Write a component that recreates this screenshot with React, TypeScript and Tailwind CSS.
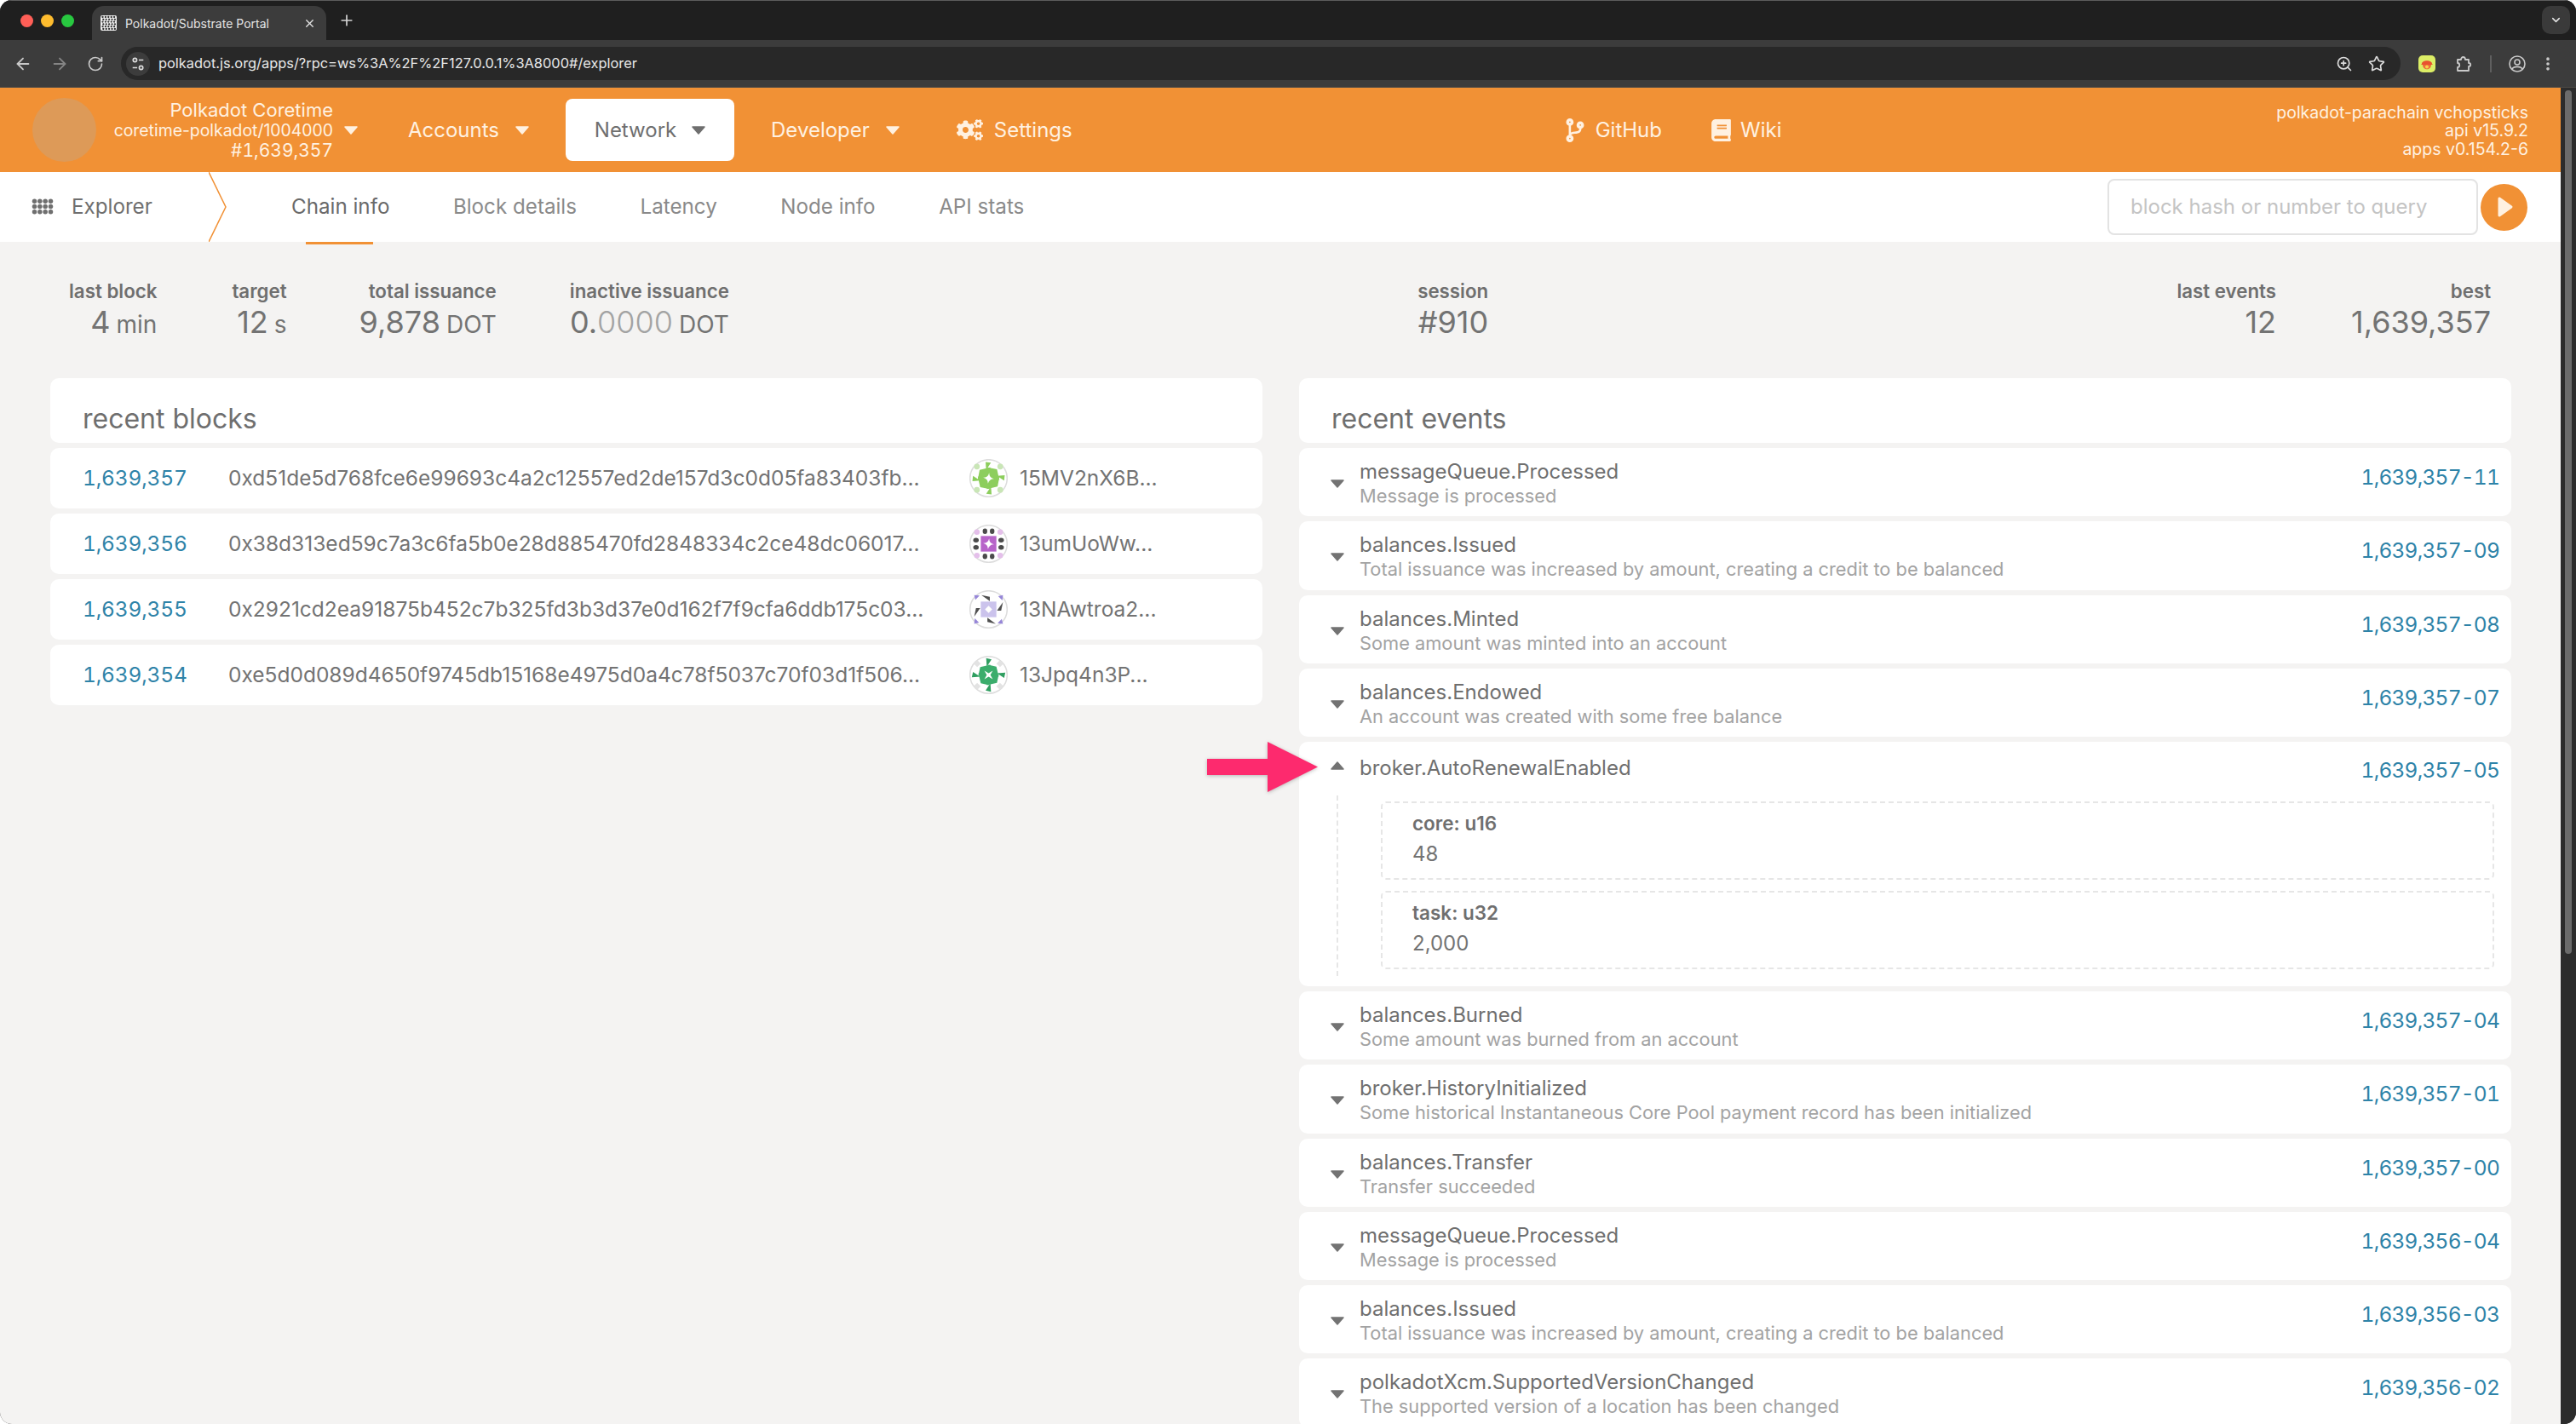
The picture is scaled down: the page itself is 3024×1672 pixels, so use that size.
import { ArrowLeft, ArrowRight, ChevronDown, EllipsisVertical, Plus, RotateCw, Star, X, ZoomIn } from "lucide-react"
import { FaBook, FaCodeBranch, FaCogs } from "react-icons/fa"

const blocks = [
  { number: "1,639,357", hash: "0xd51de5d768fce6e99693c4a2c12557ed2de157d3c0d05fa83403fb...", author: "15MV2nX6B...", icon: 0 },
  { number: "1,639,356", hash: "0x38d313ed59c7a3c6fa5b0e28d885470fd2848334c2ce48dc06017...", author: "13umUoWw...", icon: 1 },
  { number: "1,639,355", hash: "0x2921cd2ea91875b452c7b325fd3b3d37e0d162f7f9cfa6ddb175c03...", author: "13NAwtroa2...", icon: 2 },
  { number: "1,639,354", hash: "0xe5d0d089d4650f9745db15168e4975d0a4c78f5037c70f03d1f506...", author: "13Jpq4n3P...", icon: 3 },
]

const eventsTop = [
  { name: "messageQueue.Processed", desc: "Message is processed", id: "1,639,357-11" },
  { name: "balances.Issued", desc: "Total issuance was increased by amount, creating a credit to be balanced", id: "1,639,357-09" },
  { name: "balances.Minted", desc: "Some amount was minted into an account", id: "1,639,357-08" },
  { name: "balances.Endowed", desc: "An account was created with some free balance", id: "1,639,357-07" },
]

const eventsBottom = [
  { name: "balances.Burned", desc: "Some amount was burned from an account", id: "1,639,357-04" },
  { name: "broker.HistoryInitialized", desc: "Some historical Instantaneous Core Pool payment record has been initialized", id: "1,639,357-01" },
  { name: "balances.Transfer", desc: "Transfer succeeded", id: "1,639,357-00" },
  { name: "messageQueue.Processed", desc: "Message is processed", id: "1,639,356-04" },
  { name: "balances.Issued", desc: "Total issuance was increased by amount, creating a credit to be balanced", id: "1,639,356-03" },
  { name: "polkadotXcm.SupportedVersionChanged", desc: "The supported version of a location has been changed", id: "1,639,356-02" },
]

const turns = [0, 90, 180, 270]

function Caret({ up = false, className = "" }: { up?: boolean; className?: string }) {
  return (
    <svg viewBox="0 0 16 10" className={`w-4 h-2.5 fill-current shrink-0 ${className}`}>
      {up ? (
        <path d="M8 1 L15 9 L1 9 Z" stroke="currentColor" strokeWidth="1.5" strokeLinejoin="round" />
      ) : (
        <path d="M1 1 L15 1 L8 9 Z" stroke="currentColor" strokeWidth="1.5" strokeLinejoin="round" />
      )}
    </svg>
  )
}

function Identicon({ kind }: { kind: number }) {
  return (
    <svg viewBox="0 0 64 64" className="w-[45px] h-[45px] shrink-0">
      <circle cx="32" cy="32" r="31" fill="#fff" stroke="#dddddd" strokeWidth="2.2" />
      {turns.map((t) => (
        <g key={t} transform={`rotate(${t} 32 32)`}>
          {kind === 0 && (
            <>
              <circle cx="12.5" cy="12.5" r="4.8" fill="#c9e6b6" />
              <path d="M27 5 L36 6 L28 18 Z" fill="#8dce5d" />
              <path d="M17 18 L35 14 L32 32 L14 34 Z" fill="#8dce5d" />
            </>
          )}
          {kind === 1 && (
            <>
              <circle cx="12.5" cy="12.5" r="4.6" fill="#e4bfea" />
              <ellipse cx="26" cy="11" rx="3.8" ry="4.6" fill="#4b4b4b" />
              <ellipse cx="38" cy="11" rx="3.8" ry="4.6" fill="#4b4b4b" />
            </>
          )}
          {kind === 2 && (
            <>
              <path d="M8 8 L17 9 L10 16 Z" fill="#9686d8" />
              <path d="M20 8 L34 11 L34 18 Z" fill="#4f4f4f" />
            </>
          )}
          {kind === 3 && (
            <>
              <path d="M7 13 L13 7 L19 13 L13 19 Z" fill="#e3e3e3" />
              <path d="M28 4 L37 6 L29 18 Z" fill="#2f9e60" />
              <path d="M18 19 L35 15 L32 32 L15 33 Z" fill="#3bad6c" />
            </>
          )}
        </g>
      ))}
      {kind === 1 && <rect x="19" y="19" width="26" height="26" fill="#b764c9" />}
      {kind === 2 && <rect x="19" y="19" width="26" height="26" fill="#cbc3ec" />}
      {kind === 2 ? (
        <path d="M32 26 L38 32 L32 38 L26 32 Z" fill="#fff" />
      ) : kind === 3 ? (
        <path d="M25 25 L32 29 L39 25 L35 32 L39 39 L32 35 L25 39 L29 32 Z" fill="#fff" />
      ) : (
        <path d="M33 23 Q33 31 41 33 Q33 33 31 41 Q31 33 23 31 Q31 31 33 23 Z" fill="#fff" />
      )}
    </svg>
  )
}

function ExplorerGrid() {
  const dots = []
  for (let r = 0; r < 3; r++) {
    for (let c = 0; c < 4; c++) {
      dots.push(<circle key={`${r}-${c}`} cx={3 + c * 6} cy={3 + r * 6} r="2.6" />)
    }
  }
  return (
    <svg viewBox="0 0 24 18" className="w-[26px] h-[19px] fill-[#6f6f6f]">
      {dots}
    </svg>
  )
}

function Favicon() {
  const dots = []
  for (let r = 0; r < 6; r++) {
    for (let c = 0; c < 5; c++) {
      dots.push(<circle key={`${r}-${c}`} cx={2.5 + c * 3.4 + (r % 2) * 0.8} cy={2 + r * 2.8} r="1.15" />)
    }
  }
  return (
    <svg viewBox="0 0 19 18" className="w-[19px] h-[18px] bg-[#f2f2f2] fill-[#333333] rounded-[2px] shrink-0">
      {dots}
    </svg>
  )
}

function ChromeBar() {
  return (
    <>
      <div className="h-[47px] flex items-end border-t border-[#5c5c5c] bg-[#1f1f1f] relative shrink-0">
        <div className="flex items-center gap-[9px] pl-[24px] w-[108px] h-full">
          <span className="w-[15px] h-[15px] rounded-full bg-[#ff5f57]" />
          <span className="w-[15px] h-[15px] rounded-full bg-[#febc2e]" />
          <span className="w-[15px] h-[15px] rounded-full bg-[#28c840]" />
        </div>
        <div className="w-[275px] h-[40px] bg-[#3c3c3c] rounded-t-[14px] flex items-center pl-[10px] pr-[12px] text-[#e3e3e3] text-[14px]">
          <Favicon />
          <span className="ml-[10px] flex-1 whitespace-nowrap">Polkadot/Substrate Portal</span>
          <X className="w-[15px] h-[15px]" strokeWidth={2.2} />
        </div>
        <Plus className="w-[20px] h-[20px] text-[#d6d6d6] ml-[14px] mb-[13px]" strokeWidth={2} />
        <div className="ml-auto mr-[7px] mb-[7px] w-[33px] h-[33px] rounded-[10px] bg-[#3a3a3a] flex items-center justify-center">
          <ChevronDown className="w-[15px] h-[15px] text-[#e3e3e3]" strokeWidth={2.5} />
        </div>
      </div>
      <div className="h-[56px] bg-[#3c3c3c] flex items-center border-b border-[#4e4a45] text-[#c9c9c9] shrink-0">
        <div className="w-[142px] flex items-center pl-[16px] gap-[21px] shrink-0">
          <ArrowLeft className="w-[22px] h-[22px]" strokeWidth={2} />
          <ArrowRight className="w-[22px] h-[22px] text-[#858585]" strokeWidth={2} />
          <RotateCw className="w-[20px] h-[20px]" strokeWidth={2} />
        </div>
        <div className="w-[2676px] h-[39px] rounded-full bg-[#282828] flex items-center pl-[6px] pr-[18px]">
          <div className="w-[28px] h-[28px] rounded-full bg-[#3c3c3c] flex items-center justify-center">
            <svg viewBox="0 0 20 20" className="w-[18px] h-[18px] stroke-[#dedede] fill-none" strokeWidth="1.8">
              <circle cx="6" cy="5" r="2.4" />
              <path d="M11 5 H17" />
              <path d="M3 15 H9" />
              <circle cx="14" cy="15" r="2.4" />
            </svg>
          </div>
          <span className="ml-[10px] text-[#e8e8e8] text-[16.4px] whitespace-nowrap">polkadot.js.org/apps/?rpc=ws%3A%2F%2F127.0.0.1%3A8000#/explorer</span>
          <ZoomIn className="ml-auto w-[20px] h-[20px] text-[#dcdcdc]" strokeWidth={2} />
          <Star className="ml-[18px] w-[20px] h-[20px] text-[#dcdcdc]" strokeWidth={2} />
        </div>
        <div className="flex items-center flex-1 pl-[21px]">
          <svg viewBox="0 0 20 20" className="w-[20px] h-[20px]">
            <rect width="20" height="20" rx="5" fill="#dcee66" />
            <path d="M4 10 C4 5 16 5 16 10 L17 11 L3 11 Z" fill="#e8512f" />
            <path d="M5 11 H15 C15 18 5 18 5 11 Z" fill="#ee6a3a" />
            <circle cx="10" cy="13.5" r="2" fill="#f6d04d" />
          </svg>
          <svg viewBox="0 0 20 20" className="ml-[23px] w-[20px] h-[20px] fill-none stroke-[#c9c9c9]" strokeWidth="1.8" strokeLinejoin="round">
            <path d="M3 5 H7 C7 1 12 1 12 5 H16 V9 C19 9 19 13 16 13 V18 H3 V14 C6 14 6 9 3 9 Z" />
          </svg>
          <span className="ml-[21px] w-[1.5px] h-[20px] bg-[#5f5f5f]" />
          <svg viewBox="0 0 20 20" className="ml-[20px] w-[20px] h-[20px] fill-none stroke-[#c9c9c9]" strokeWidth="1.6">
            <circle cx="10" cy="10" r="9" />
            <circle cx="10" cy="8" r="3" />
            <path d="M4 16 C6 12.5 14 12.5 16 16" />
          </svg>
          <EllipsisVertical className="ml-[16px] w-[20px] h-[20px]" strokeWidth={2.4} />
        </div>
      </div>
    </>
  )
}

function NavDropdown({ label }: { label: string }) {
  return (
    <div className="flex items-center gap-[19px] text-[#fff1e1]">
      <span>{label}</span>
      <Caret />
    </div>
  )
}

function TopNav() {
  return (
    <div className="h-[99px] bg-[#f19135] flex items-center text-[24px] text-[#fff1e1] shrink-0 whitespace-nowrap">
      <div className="ml-[38px] w-[75px] h-[75px] rounded-full bg-[#dd9a58] shrink-0" />
      <div className="w-[307px] shrink-0 text-[19.4px] leading-[24px] text-right pt-[1px]">
        <div className="pr-[29px] text-[22px]">Polkadot Coretime</div>
        <div className="flex justify-end items-center gap-[13px]">
          <span>coretime-polkadot/1004000</span>
          <Caret />
        </div>
        <div className="pr-[29px] text-[21px] tabular-nums">#1,639,357</div>
      </div>
      <div className="ml-[59px]">
        <NavDropdown label="Accounts" />
      </div>
      <div className="ml-[43px] w-[198px] h-[73px] bg-white rounded-[8px] flex items-center justify-center gap-[18px] text-[#6f6f6f]">
        <span>Network</span>
        <Caret />
      </div>
      <div className="ml-[43px]">
        <NavDropdown label="Developer" />
      </div>
      <div className="ml-[67px] flex items-center gap-[13px]">
        <FaCogs className="w-[31px] h-[31px]" />
        <span>Settings</span>
      </div>
      <div className="ml-[578px] flex items-center gap-[12px]">
        <FaCodeBranch className="w-[24px] h-[28px]" />
        <span>GitHub</span>
      </div>
      <div className="ml-[58px] flex items-center gap-[11px]">
        <FaBook className="w-[23px] h-[26px]" />
        <span>Wiki</span>
      </div>
      <div className="ml-auto pr-[38px] pt-[3px] text-right text-[19.5px] leading-[21.5px]">
        <div>polkadot-parachain vchopsticks</div>
        <div>api v15.9.2</div>
        <div>apps v0.154.2-6</div>
      </div>
    </div>
  )
}

function SubNav() {
  return (
    <div className="h-[82px] bg-white flex items-center text-[24.2px] text-[#8a8a8a] shrink-0 relative whitespace-nowrap">
      <div className="ml-[37px] w-[208px] flex items-center gap-[21px] text-[#6f6f6f]">
        <ExplorerGrid />
        <span>Explorer</span>
      </div>
      <svg viewBox="0 0 22 82" className="w-[22px] h-[82px] fill-none stroke-[#f19135] shrink-0" strokeWidth="1.5">
        <path d="M0 0 L20 41 L0 82" />
      </svg>
      <div className="ml-[75px] relative text-[#6a6a6a]">
        <span>Chain info</span>
        <div className="absolute left-[17px] top-[59px] w-[79px] h-[3px] bg-[#f19135]" />
      </div>
      <span className="ml-[74.5px]">Block details</span>
      <span className="ml-[74.5px]">Latency</span>
      <span className="ml-[74.5px]">Node info</span>
      <span className="ml-[74.5px]">API stats</span>
      <div className="ml-auto mr-[39px] flex items-center gap-[3px]">
        <div className="w-[435px] h-[66px] rounded-[8px] border-2 border-[#e3e3e3] flex items-center pl-[25px] text-[24px] text-[#c4c4c4]">block hash or number to query</div>
        <div className="w-[55px] h-[55px] rounded-full bg-[#f19135] flex items-center justify-center">
          <svg viewBox="0 0 20 26" className="w-[20px] h-[26px] ml-[2px]">
            <path d="M3 3 L17 13 L3 23 Z" fill="#fff1e1" stroke="#fff1e1" strokeWidth="3" strokeLinejoin="round" />
          </svg>
        </div>
      </div>
    </div>
  )
}

function Stat({ label, children }: { label: string; children: React.ReactNode }) {
  return (
    <div className="text-right whitespace-nowrap">
      <div className="text-[22.3px] leading-[28px] font-semibold text-[#6f6f6f]">{label}</div>
      <div className="text-[36px] leading-[44px] text-[#737373]">{children}</div>
    </div>
  )
}

function Unit({ children }: { children: React.ReactNode }) {
  return <span className="ml-[7px] text-[28px]">{children}</span>
}

function Summary() {
  return (
    <div className="flex justify-between pl-[81px] pr-[82px] pt-[44px] h-[160px] shrink-0">
      <div className="flex">
        <div className="flex gap-[88px]">
          <Stat label="last block">
            4<Unit>min</Unit>
          </Stat>
          <Stat label="target">
            12<Unit>s</Unit>
          </Stat>
        </div>
        <div className="ml-[85px] flex gap-[86px]">
          <Stat label="total issuance">
            9,878<Unit>DOT</Unit>
          </Stat>
          <Stat label="inactive issuance">
            0.<span className="font-light text-[#a3a3a3]">0000</span>
            <Unit>DOT</Unit>
          </Stat>
        </div>
      </div>
      <Stat label="session">#910</Stat>
      <div className="flex gap-[88px]">
        <Stat label="last events">12</Stat>
        <Stat label="best">1,639,357</Stat>
      </div>
    </div>
  )
}

function CardHeader({ title }: { title: string }) {
  return (
    <div className="h-[76px] bg-white rounded-[10px] pl-[38px] pt-[21px] text-[32px] leading-[54px] text-[#6f6f6f] shrink-0">{title}</div>
  )
}

function BlockRow({ number, hash, author, icon }: { number: string; hash: string; author: string; icon: number }) {
  return (
    <div className="h-[71px] bg-white rounded-[10px] flex items-center text-[24.5px] text-[#737373] whitespace-nowrap shrink-0">
      <span className="ml-[38px] w-[171px] text-[#2e83a8] tabular-nums tracking-[-0.2px]">{number}</span>
      <span className="w-[870px] shrink-0">{hash}</span>
      <Identicon kind={icon} />
      <span className="ml-[14px]">{author}</span>
    </div>
  )
}

function EventRow({ name, desc, id }: { name: string; desc: string; id: string }) {
  return (
    <div className="h-[80.25px] bg-white rounded-[10px] flex pl-[37px] pr-[14px] whitespace-nowrap shrink-0">
      <div className="w-[34px] pt-[37px] text-[#737373]">
        <Caret />
      </div>
      <div className="pt-[12px]">
        <div className="text-[24px] leading-[32px] text-[#6f6f6f]">{name}</div>
        <div className="text-[21.8px] leading-[25px] text-[#a3a3a3]">{desc}</div>
      </div>
      <span className="ml-auto pt-[18px] text-[24.5px] leading-[32px] text-[#2e83a8] tabular-nums tracking-[-0.8px]">{id}</span>
    </div>
  )
}

function ParamBox({ label, value }: { label: string; value: string }) {
  return (
    <div className="h-[92px] rounded-[6px] border-2 border-dashed border-[#e6e6e6] pl-[35px] pt-[10px]">
      <div className="text-[22.5px] leading-[28px] font-semibold text-[#6f6f6f]">{label}</div>
      <div className="mt-[6px] text-[24px] leading-[32px] text-[#737373]">{value}</div>
    </div>
  )
}

function ExpandedEvent() {
  return (
    <div className="h-[287px] bg-white rounded-[10px] pl-[37px] pr-[14px] shrink-0 relative">
      <div className="flex h-[63px] whitespace-nowrap">
        <div className="w-[34px] pt-[23px] text-[#737373]">
          <Caret up />
        </div>
        <div className="pt-[15px] text-[24px] leading-[32px] text-[#6f6f6f]">broker.AutoRenewalEnabled</div>
        <span className="ml-auto pt-[17px] text-[24.5px] leading-[32px] text-[#2e83a8] tabular-nums tracking-[-0.8px]">1,639,357-05</span>
      </div>
      <div className="flex">
        <div className="ml-[7px] w-0 h-[212px] border-l-2 border-dashed border-[#e6e6e6]" />
        <div className="ml-[50px] mt-[7px] flex-1 mr-[6px] flex flex-col gap-[13px]">
          <ParamBox label="core: u16" value="48" />
          <ParamBox label="task: u32" value="2,000" />
        </div>
      </div>
      {/* annotation arrow over the row */}
      <svg viewBox="0 0 130 59" className="absolute left-[-108px] top-[0px] w-[130px] h-[59px] drop-shadow-[0_1px_2px_rgba(0,0,0,0.25)]">
        <path d="M0 20 H71 V0 L130 29.5 L71 59 V39 H0 Z" fill="#fd2a6e" />
      </svg>
    </div>
  )
}

export default function App() {
  return (
    <div className="w-[3024px] h-[1672px] overflow-hidden flex flex-col bg-[#1f1f1f] font-['Inter',sans-serif] rounded-[14px]">
      <ChromeBar />
      <div className="flex-1 flex min-h-0">
        <div className="w-[3006px] flex flex-col min-h-0 bg-[#f4f3f2]">
          <TopNav />
          <SubNav />
          <Summary />
          <div className="flex gap-[43px] px-[59px] pr-[58px]">
            <div className="w-[1423px] flex flex-col gap-[6px] shrink-0">
              <CardHeader title="recent blocks" />
              {blocks.map((b) => (
                <BlockRow key={b.number} {...b} />
              ))}
            </div>
            <div className="w-[1423px] flex flex-col gap-[6px] shrink-0">
              <CardHeader title="recent events" />
              {eventsTop.map((e) => (
                <EventRow key={e.id} {...e} />
              ))}
              <ExpandedEvent />
              {eventsBottom.map((e) => (
                <EventRow key={e.id} {...e} />
              ))}
            </div>
          </div>
        </div>
        <div className="w-[18px] bg-[#2c2c2c] px-[5px] pt-[3px]">
          <div className="h-[1014px] rounded-full bg-[#6b6b6b]" />
        </div>
      </div>
    </div>
  )
}
